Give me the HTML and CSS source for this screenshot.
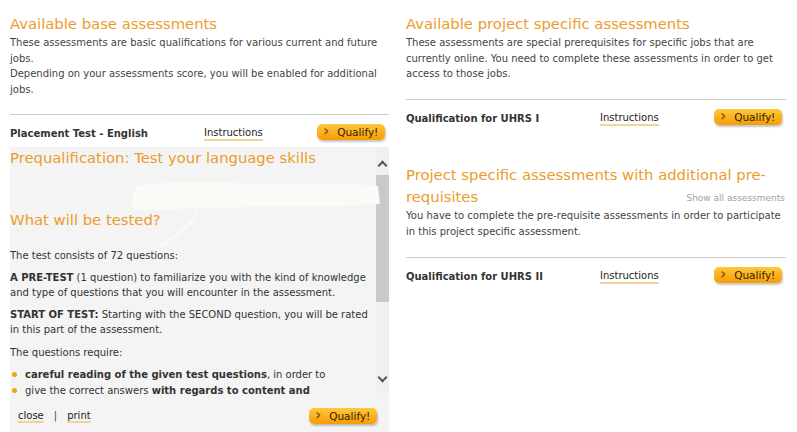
FILE: index.html
```html
<!DOCTYPE html>
<html lang="en">
<head>
    <meta charset="UTF-8">
    <title>Assessments</title>
    <link rel="stylesheet" href="styles.css">
</head>
<body>
    <div class="page">
        <div class="column left">
            <h2>Available base assessments</h2>
            <p class="intro">These assessments are basic qualifications for various current and future jobs.<br>Depending on your assessments score, you will be enabled for additional jobs.</p>

            <div class="assessment-row">
                <span class="name">Placement Test - English</span>
                <a class="instructions" href="#">Instructions</a>
                <a class="qualify" href="#"><span class="chev">&#8250;</span>Qualify!</a>
            </div>

            <div class="details">
                <div class="details-scroll">
                    <div class="details-content">
                        <h3>Prequalification: Test your language skills</h3>
                        <div class="smudge">
                            <svg width="260" height="80" viewBox="0 0 260 80">
                                <path d="M10 12 C40 7 90 8 130 10 C170 11 215 9 250 12 L252 30 C210 33 160 31 120 33 C80 34 40 36 6 35 C2 28 4 20 10 12 Z" fill="#f9fbf6"/>
                                <path d="M70 38 C64 50 52 60 32 72" stroke="#f8faf4" stroke-width="3" fill="none"/>
                            </svg>
                        </div>
                        <h3 class="tested">What will be tested?</h3>
                        <p>The test consists of 72 questions:</p>
                        <p><b>A PRE-TEST</b> (1 question) to familiarize you with the kind of knowledge and type of questions that you will encounter in the assessment.</p>
                        <p><b>START OF TEST:</b> Starting with the SECOND question, you will be rated in this part of the assessment.</p>
                        <p>The questions require:</p>
                        <ul>
                            <li><b>careful reading of the given test questions</b>, in order to</li>
                            <li>give the correct answers <b>with regards to content and</b></li>
                        </ul>
                    </div>
                    <div class="scrollbar">
                        <span class="arrow up"></span>
                        <span class="thumb"></span>
                        <span class="arrow down"></span>
                    </div>
                </div>
                <div class="details-footer">
                    <div class="links"><a href="#">close</a><span class="sep">|</span><a href="#">print</a></div>
                    <a class="qualify" href="#"><span class="chev">&#8250;</span>Qualify!</a>
                </div>
            </div>
        </div>

        <div class="column right">
            <h2>Available project specific assessments</h2>
            <p class="intro">These assessments are special prerequisites for specific jobs that are currently online. You need to complete these assessments in order to get access to those jobs.</p>

            <div class="assessment-row">
                <span class="name">Qualification for UHRS I</span>
                <a class="instructions" href="#">Instructions</a>
                <a class="qualify" href="#"><span class="chev">&#8250;</span>Qualify!</a>
            </div>

            <div class="heading-line">
                <h2>Project specific assessments with additional pre-requisites</h2>
                <a class="show-all" href="#">Show all assessments</a>
            </div>
            <p class="intro">You have to complete the pre-requisite assessments in order to participate in this project specific assessment.</p>

            <div class="assessment-row last">
                <span class="name">Qualification for UHRS II</span>
                <a class="instructions" href="#">Instructions</a>
                <a class="qualify" href="#"><span class="chev">&#8250;</span>Qualify!</a>
            </div>
        </div>
    </div>
</body>
</html>
```

FILE: styles.css
```css
body {
    margin: 0;
    font-family: "DejaVu Sans", Verdana, sans-serif;
    font-size: 10px;
    color: #333333;
    background-color: #ffffff;
}
a {
    color: #222222;
    text-decoration: none;
}
.page {
    display: flex;
    gap: 17px;
    padding: 0 11px 0 10px;
}
.column {
    width: 379px;
    flex: none;
}
.column.right {
    width: 380px;
}
h2 {
    font-weight: normal;
    font-size: 14.8px;
    color: #eb9c2c;
    margin: 14px 0 1px;
    line-height: 20px;
}
.intro {
    margin: 0;
    line-height: 15.5px;
    color: #444444;
}
.assessment-row {
    display: flex;
    align-items: center;
    border-top: 1px solid #cccccc;
    margin-top: 17px;
    height: 30px;
    padding-top: 2px;
}
.right .assessment-row {
    margin-top: 17.5px;
    padding-top: 4px;
    height: 26px;
}
.right .assessment-row.last {
    margin-top: 18px;
    padding-top: 4px;
}
.assessment-row .name {
    font-weight: bold;
    width: 194px;
    padding-top: 2px;
}
.instructions {
    border-bottom: 2px solid #f2d49a;
    padding-top: 3px;
    line-height: 12px;
}
.assessment-row .qualify {
    margin-left: auto;
    margin-right: 4px;
}
.qualify {
    display: flex;
    align-items: center;
    width: 68px;
    height: 16px;
    box-sizing: border-box;
    padding-left: 6px;
    border-radius: 5px;
    background: linear-gradient(#ffc83c, #f79c04);
    box-shadow: 1px 2px 2px rgba(0, 0, 0, 0.22);
    color: #2e2200;
    font-size: 10.5px;
}
.qualify .chev {
    color: #8a5a10;
    font-size: 15px;
    font-weight: bold;
    margin-right: 8px;
    line-height: 14px;
    margin-top: -2px;
}
.details {
    background-color: #f4f4f4;
}
.details-scroll {
    display: flex;
    height: 250px;
    overflow: hidden;
}
.details-content {
    flex: 1;
}
.details-content h3 {
    font-weight: normal;
    font-size: 14.8px;
    color: #eb9c2c;
    margin: 1px 0 0;
    line-height: 20px;
}
.smudge {
    height: 41px;
    position: relative;
}
.smudge svg {
    position: absolute;
    left: 118px;
    top: 6px;
}
.details-content .tested {
    position: relative;
}
.details-content p {
    margin: 0 0 7px;
    line-height: 15px;
}
.details-content p:first-of-type {
    margin-top: 17.5px;
}
.details-content p:nth-of-type(4) {
    margin-top: 8px;
}
.details-content ul {
    margin: 0;
    padding: 0 0 0 15px;
    list-style: none;
}
.details-content li {
    position: relative;
    line-height: 16px;
}
.details-content li::before {
    content: "";
    position: absolute;
    left: -13px;
    top: 5px;
    width: 5px;
    height: 5px;
    border-radius: 50%;
    background: #f0a020;
}
.scrollbar {
    width: 13px;
    display: flex;
    flex-direction: column;
    align-items: center;
    background: #f0f0f0;
    height: 246px;
}
.arrow {
    width: 13px;
    height: 28px;
    display: flex;
    justify-content: center;
    align-items: center;
}
.arrow::before {
    content: "";
    width: 5px;
    height: 5px;
    border-left: 2px solid #555555;
    border-top: 2px solid #555555;
}
.arrow.up::before {
    transform: rotate(45deg);
    margin-top: 8px;
}
.arrow.down {
    margin-top: auto;
}
.arrow.down::before {
    transform: rotate(225deg);
    margin-top: -3px;
}
.thumb {
    width: 13px;
    height: 127px;
    background: #c9c9c9;
}
.details-footer {
    display: flex;
    align-items: center;
    justify-content: space-between;
    padding: 11px 12px 10px 8px;
}
.links a {
    border-bottom: 2px solid #f2d49a;
    line-height: 12px;
}
.links .sep {
    margin: 0 10px;
    color: #444444;
}
.heading-line {
    margin-top: 34px;
    position: relative;
}
.heading-line h2 {
    margin: 0;
    line-height: 22px;
}
.show-all {
    position: absolute;
    right: 1px;
    bottom: 5px;
    color: #a0a0a0;
    font-size: 9px;
}
```
